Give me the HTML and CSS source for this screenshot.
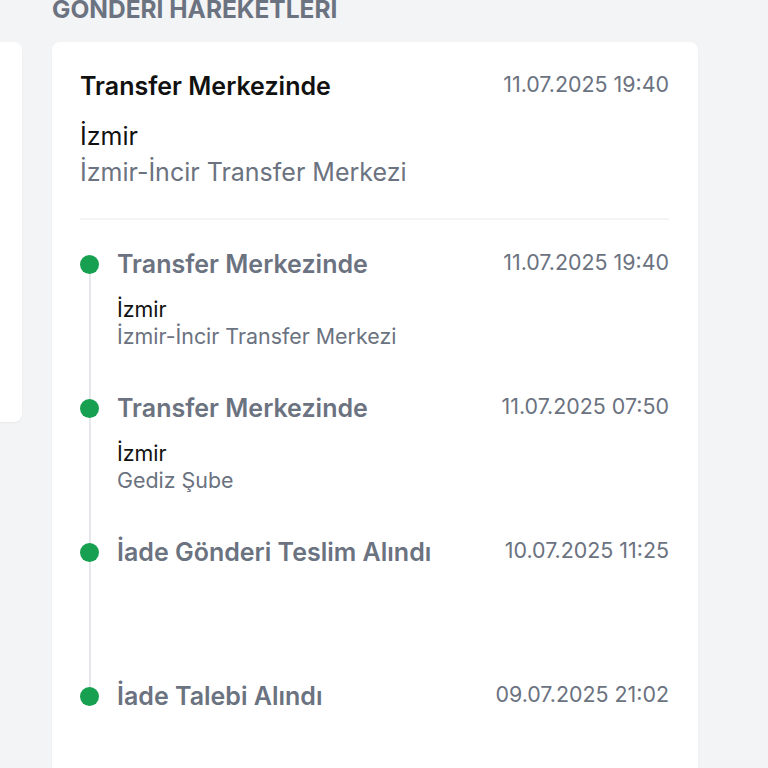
FILE: index.html
```html
<!DOCTYPE html>
<html lang="tr">
<head>
    <meta charset="UTF-8">
    <meta name="viewport" content="width=device-width, initial-scale=1.0">
    <title>Gönderi Hareketleri</title>
    <link rel="stylesheet" href="styles.css">
</head>
<body>
    <div class="layout">
        <div class="side-card"></div>
        <div class="main">
            <h2 class="section-title">Gönderi Hareketleri</h2>
            <div class="card">
                <div class="current">
                    <div class="row">
                        <span class="current-status">Transfer Merkezinde</span>
                        <span class="date">11.07.2025 19:40</span>
                    </div>
                    <div class="current-city">İzmir</div>
                    <div class="current-place">İzmir-İncir Transfer Merkezi</div>
                </div>

                <div class="timeline">
                    <div class="event">
                        <span class="dot"></span>
                        <div class="row">
                            <span class="event-status">Transfer Merkezinde</span>
                            <span class="date">11.07.2025 19:40</span>
                        </div>
                        <div class="event-city">İzmir</div>
                        <div class="event-place">İzmir-İncir Transfer Merkezi</div>
                    </div>
                    <div class="event">
                        <span class="dot"></span>
                        <div class="row">
                            <span class="event-status">Transfer Merkezinde</span>
                            <span class="date">11.07.2025 07:50</span>
                        </div>
                        <div class="event-city">İzmir</div>
                        <div class="event-place">Gediz Şube</div>
                    </div>
                    <div class="event">
                        <span class="dot"></span>
                        <div class="row">
                            <span class="event-status">İade Gönderi Teslim Alındı</span>
                            <span class="date">10.07.2025 11:25</span>
                        </div>
                    </div>
                    <div class="event last">
                        <span class="dot"></span>
                        <div class="row">
                            <span class="event-status">İade Talebi Alındı</span>
                            <span class="date">09.07.2025 21:02</span>
                        </div>
                    </div>
                </div>
            </div>
        </div>
    </div>
</body>
</html>
```

FILE: styles.css
```css
body {
    margin: 0;
    padding: 0;
    background-color: #f3f4f6;
    font-family: Inter, "Noto Sans", sans-serif;
    overflow: hidden;
}
.layout {
    display: flex;
    align-items: flex-start;
    gap: 30px;
    margin-top: -6px;
}
.side-card {
    width: 22px;
    height: 380px;
    background: #fff;
    border-radius: 0 8px 8px 0;
    margin-top: 48px;
    box-shadow: 0 1px 2px rgba(0, 0, 0, 0.05);
}
.main {
    width: 646px;
}
.section-title {
    margin: 0 0 17px;
    font-size: 24.5px;
    font-weight: 700;
    line-height: 31px;
    color: #6b7280;
    text-transform: uppercase;
}
.card {
    background: #fff;
    border-radius: 8px;
    padding: 29px 29px 60px 28px;
    box-shadow: 0 1px 2px rgba(0, 0, 0, 0.05);
}
.row {
    display: flex;
    justify-content: space-between;
    align-items: flex-start;
    line-height: 30px;
}
.date {
    font-size: 21.4px;
    line-height: 26px;
    color: #6b7280;
}
.current {
    padding-bottom: 28px;
    border-bottom: 2px solid #f3f4f6;
}
.current-status {
    font-size: 25px;
    font-weight: 600;
    color: #111;
}
.current-city {
    margin-top: 17px;
    font-size: 25px;
    line-height: 36px;
    color: #111;
}
.current-place {
    font-size: 25px;
    line-height: 36px;
    color: #6b7280;
}
.timeline {
    padding-top: 29px;
}
.event {
    position: relative;
    min-height: 144px;
    padding-left: 37px;
    box-sizing: border-box;
}
.event::before {
    content: '';
    position: absolute;
    left: 9px;
    top: 15px;
    bottom: -15px;
    width: 2px;
    background: #e5e7eb;
}
.event.last::before {
    display: none;
}
.dot {
    position: absolute;
    left: 0;
    top: 6px;
    width: 19px;
    height: 19px;
    border-radius: 50%;
    background: #17a04f;
    z-index: 1;
}
.event-status {
    font-size: 25px;
    font-weight: 600;
    color: #6b7280;
}
.event-city {
    margin-top: 17px;
    font-size: 21.4px;
    line-height: 27px;
    color: #111;
}
.event-place {
    font-size: 21.4px;
    line-height: 27px;
    color: #6b7280;
}
```
